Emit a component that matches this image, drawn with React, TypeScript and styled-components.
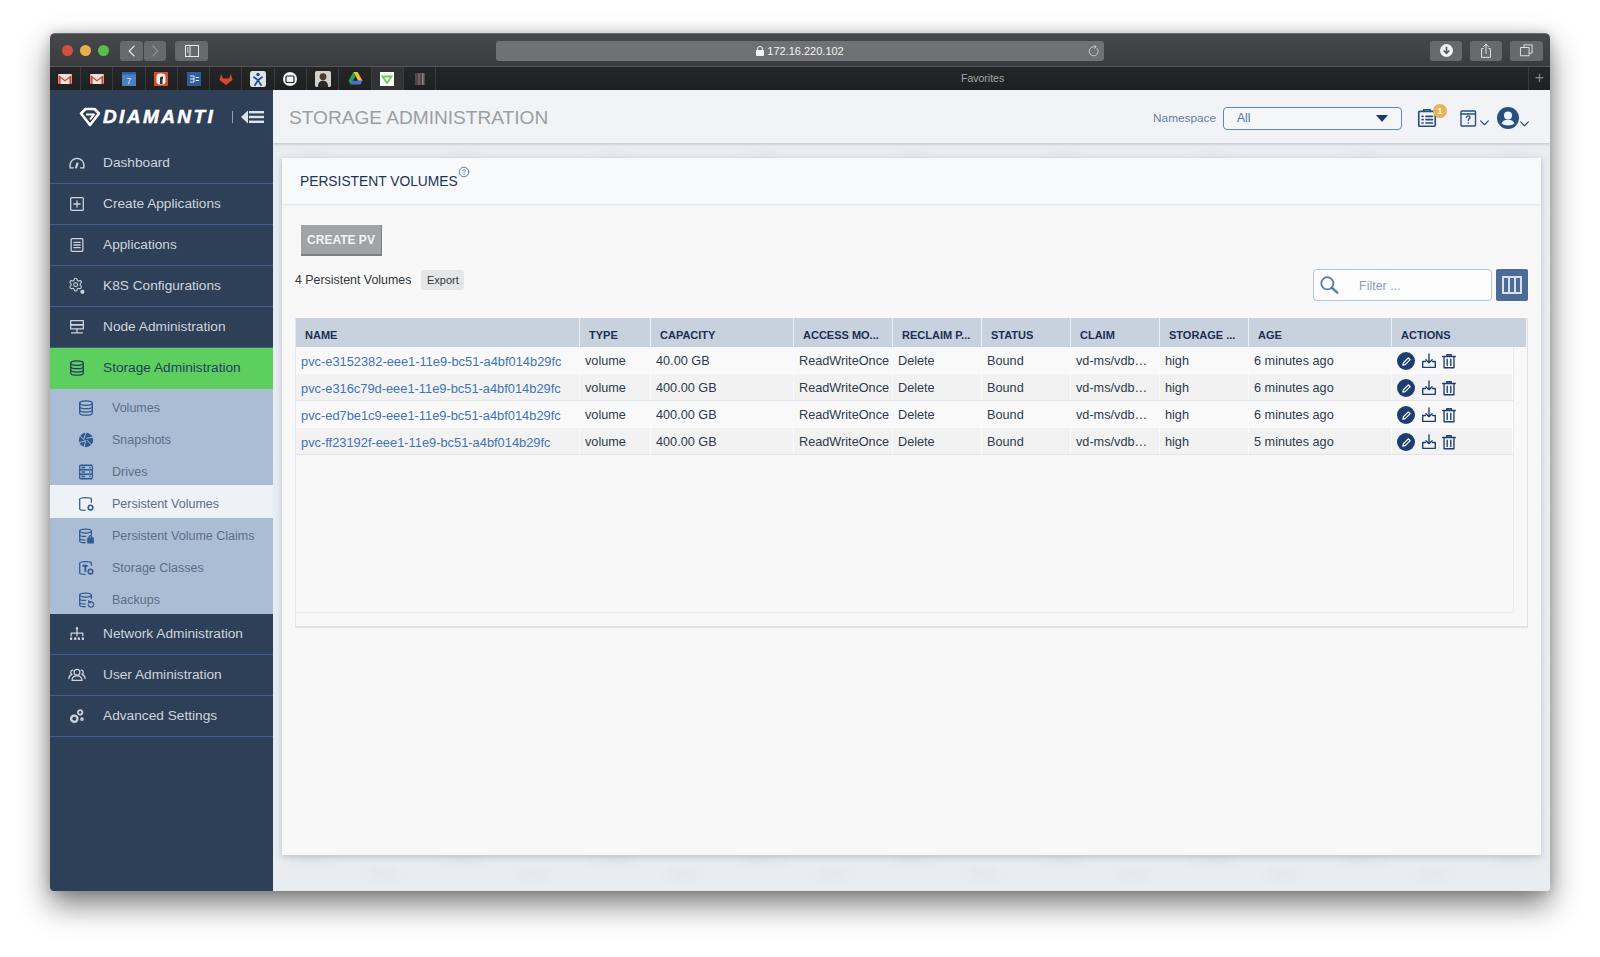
import type { ReactNode } from 'react';
import { Settings } from 'lucide-react';
import styled, { createGlobalStyle } from 'styled-components';

const FONT = '"Liberation Sans", Arial, sans-serif';

const GlobalStyle = createGlobalStyle`
	html, body {
		margin: 0;
		padding: 0;
		background: #fff;
		font-family: ${FONT};
	}
	* { box-sizing: border-box; }
	svg { display: block; }
`;

const Page = styled.div`
	width: 1600px;
	height: 957px;
	padding: 33px 0 0 50px;
	overflow: hidden;
`;

const Window = styled.div`
	width: 1500px;
	height: 858px;
	border-radius: 5px 5px 4px 4px;
	overflow: hidden;
	box-shadow: 0 14px 30px rgba(0, 0, 0, 0.5), 0 0 12px rgba(0, 0, 0, 0.18);
	display: flex;
	flex-direction: column;
`;

const TitleBar = styled.div`
	height: 34px;
	flex: none;
	background: linear-gradient(#46484b, #393b3e);
	border-top: 1px solid #6a6b6d;
	border-bottom: 1px solid #55575a;
	display: flex;
	align-items: center;
	padding: 1px 0 0 12px;
`;

const Light = styled.span<{ $color: string }>`
	width: 11px;
	height: 11px;
	border-radius: 50%;
	background: ${p => p.$color};
	margin-right: 7px;
`;

const ChromeBtn = styled.div<{ $w: number; $ml?: number; $dim?: boolean }>`
	width: ${p => p.$w}px;
	height: 20px;
	margin-left: ${p => p.$ml ?? 0}px;
	background: #68696c;
	border-radius: 3px;
	display: flex;
	align-items: center;
	justify-content: center;
	color: ${p => (p.$dim ? '#8f9092' : '#e8e8e8')};
`;

const AddressBar = styled.div`
	width: 608px;
	height: 20px;
	margin: 0 326px 0 288px;
	background: #707174;
	border-radius: 3px;
	color: #f2f2f2;
	font-size: 11px;
	display: flex;
	align-items: center;
	justify-content: center;
	gap: 3px;
	position: relative;
`;

const Reload = styled.span`
	position: absolute;
	right: 4px;
	top: 4px;
	color: #d8d8d8;
`;

const TabBar = styled.div`
	height: 23px;
	flex: none;
	background: linear-gradient(#252628, #1f2022);
	display: flex;
	align-items: stretch;
	position: relative;
`;

const Fav = styled.div<{ $active?: boolean }>`
	width: 32.3px;
	flex: none;
	border-right: 1px solid #3a3b3d;
	background: ${p => (p.$active ? '#313335' : 'transparent')};
	display: flex;
	align-items: center;
	justify-content: center;

	&:first-child {
		width: 31px;
	}
`;

const Favorites = styled.div`
	position: absolute;
	left: 911px;
	top: 5px;
	color: #a4a5a7;
	font-size: 10.5px;
`;

const AddTab = styled.div`
	position: absolute;
	right: 0;
	top: 0;
	width: 22px;
	height: 23px;
	border-left: 1px solid #3a3b3d;
	color: #8b8c8e;
	font-size: 16px;
	line-height: 21px;
	text-align: center;
`;

const Body = styled.div`
	flex: 1;
	display: flex;
	min-height: 0;
`;

const Sidebar = styled.nav`
	width: 223px;
	flex: none;
	background: #2e4058;
	display: flex;
	flex-direction: column;
`;

const LogoRow = styled.div`
	height: 53px;
	flex: none;
	display: flex;
	align-items: center;
	padding: 0 9px 0 29px;
	color: #fff;
`;

const LogoText = styled.span`
	font-size: 19px;
	font-weight: 700;
	font-style: italic;
	letter-spacing: 2.4px;
	margin-left: 2px;
	-webkit-text-stroke: 0.5px #fff;
`;

const LogoSep = styled.span`
	width: 1px;
	height: 12px;
	background: #8fa0b5;
	margin: 0 8px 0 auto;
`;

const NavItem = styled.div<{ $active?: boolean }>`
	height: 41px;
	flex: none;
	display: flex;
	align-items: center;
	padding: 0 0 1px 17px;
	gap: 16px;
	font-size: 13.7px;
	color: ${p => (p.$active ? '#24405f' : '#cdd4dd')};
	background: ${p => (p.$active ? '#5dcf5f' : 'transparent')};
	border-bottom: 1px solid ${p => (p.$active ? '#5dcf5f' : '#40608a')};
`;

const NavIcon = styled.span<{ $sub?: boolean }>`
	width: 20px;
	height: 20px;
	flex: none;
	display: flex;
	align-items: center;
	justify-content: center;
	color: ${p => (p.$sub ? '#2f5a8f' : 'inherit')};
`;

const SubList = styled.div`
	background: #abbdd4;
	display: flex;
	flex-direction: column;
	height: 225px;
	flex: none;
`;

const SubItem = styled.div<{ $active?: boolean }>`
	flex: 1;
	display: flex;
	align-items: center;
	padding: 5px 0 0 26px;
	gap: 16px;
	font-size: 12.5px;
	color: #5b6e88;
	background: ${p => (p.$active ? '#eef1f5' : 'transparent')};
`;

const Main = styled.main`
	flex: 1;
	min-width: 0;
	background-color: #e9ecf1;
	background-image: radial-gradient(ellipse 34px 12px at 40px 20px, rgba(190, 198, 212, 0.16), transparent),
		radial-gradient(ellipse 24px 14px at 110px 34px, rgba(200, 206, 218, 0.14), transparent);
	background-size: 150px 50px;
	display: flex;
	flex-direction: column;
`;

const Header = styled.header`
	height: 53px;
	flex: none;
	background: #f2f3f6;
	box-shadow: 0 1px 3px rgba(80, 90, 110, 0.3);
	display: flex;
	align-items: center;
	padding: 3px 0 0 16px;
`;

const PageTitle = styled.h1`
	margin: 0 auto 0 0;
	font-size: 19.1px;
	font-weight: 400;
	color: #9a9ea4;
`;

const NsLabel = styled.span`
	font-size: 11.8px;
	color: #5f7fa8;
	margin-right: 7px;
`;

const NsSelect = styled.div`
	width: 179px;
	height: 23px;
	border: 1px solid #5f86b8;
	border-radius: 4px;
	background: #f5f6f8;
	display: flex;
	align-items: center;
	justify-content: space-between;
	padding: 0 13px;
	font-size: 12px;
	color: #4a74ad;
`;

const Caret = styled.span`
	width: 0;
	height: 0;
	border-left: 6px solid transparent;
	border-right: 6px solid transparent;
	border-top: 7px solid #1d3a66;
`;

const HeaderIcons = styled.div`
	display: flex;
	align-items: center;
	margin: 0 20px 0 14px;
	color: #27507f;
`;

const HeadIcon = styled.span<{ $ml?: number }>`
	position: relative;
	margin-left: ${p => p.$ml ?? 0}px;
	display: flex;
	align-items: flex-end;
`;

const Badge = styled.span`
	position: absolute;
	left: 17px;
	top: -3px;
	width: 14px;
	height: 14px;
	border-radius: 50%;
	background: #e9b350;
	color: #fff;
	font-size: 9.5px;
	font-weight: 700;
	line-height: 14px;
	text-align: center;
`;

const Card = styled.section`
	margin: 15px 9px 36px 9px;
	flex: 1;
	background: #f8f8f9;
	box-shadow: 0 2px 6px rgba(110, 120, 140, 0.35);
	display: flex;
	flex-direction: column;
`;

const CardHead = styled.div`
	height: 46px;
	flex: none;
	padding-left: 18px;
	box-shadow: 0 1px 2px rgba(120, 130, 150, 0.18);
	display: flex;
	align-items: flex-start;
	background: #f8f9fa;
`;

const CardTitle = styled.h2`
	margin: 15px 0 0;
	font-size: 13.8px;
	line-height: 17px;
	font-weight: 400;
	color: #1b3357;
`;

const HelpMark = styled.span`
	margin: 8px 0 0 0;
	color: #3a6ea8;
`;

const CardBody = styled.div`
	padding: 21px 13px 0 13px;
	display: flex;
	flex-direction: column;
`;

const CreateButton = styled.button`
	width: 81px;
	height: 31px;
	margin-left: 6px;
	border: 0;
	border-bottom: 2px solid #7d7f82;
	border-right: 1px solid #7d7f82;
	background: #a1a3a6;
	color: #f4f4f4;
	font-family: ${FONT};
	font-size: 12px;
	font-weight: 700;
	padding: 0;
`;

const InfoRow = styled.div`
	margin-top: 13px;
	height: 32px;
	display: flex;
	align-items: flex-start;
`;

const CountText = styled.span`
	font-size: 12.4px;
	line-height: 22px;
	color: #33363b;
`;

const ExportButton = styled.span`
	margin: 1px auto 0 10px;
	width: 43px;
	height: 20px;
	border-radius: 3px;
	background: #e5e6e8;
	color: #33363b;
	font-size: 11px;
	line-height: 20px;
	text-align: center;
`;

const FilterBox = styled.div`
	width: 179px;
	height: 32px;
	border: 1px solid #b5c5da;
	border-radius: 4px;
	background: #fdfdfe;
	display: flex;
	align-items: center;
	padding-left: 4px;
	gap: 19px;
	color: #5f7ea8;
	font-size: 12.5px;
`;

const FilterHint = styled.span`
	padding-top: 2px;
	color: #8d9fb8;
`;

const ColumnsButton = styled.div`
	width: 32px;
	height: 32px;
	margin-left: 4px;
	border-radius: 2px;
	background: #4d6b96;
	display: flex;
	align-items: center;
	justify-content: center;
	color: #d9e0ea;
`;

const TableBox = styled.div`
	margin-top: 17px;
	height: 310px;
	border-right: 1px solid #e0e1e8;
	border-bottom: 2px solid #e0e1e8;
	border-left: 1px solid #e6e7ec;
`;

const COLS = '284px 71px 143px 99px 89px 89px 89px 89px 143px';

const HeadRow = styled.div`
	display: grid;
	grid-template-columns: ${COLS} 1fr;
	height: 29px;
	background: #c8d2de;
`;

const HeadCell = styled.div`
	padding: 9px 0 0 9px;
	font-size: 11px;
	line-height: 16px;
	font-weight: 700;
	color: #1b3052;
	white-space: nowrap;
	overflow: hidden;
	border-right: 1px solid #eef1f4;
`;

const RowsBox = styled.div`
	width: 1218px;
	height: 266px;
	border-right: 1px solid #ececee;
	border-bottom: 1px solid #ececee;
`;

const Row = styled.div<{ $alt?: boolean }>`
	display: grid;
	grid-template-columns: ${COLS} 1fr;
	height: 27px;
	background: ${p => (p.$alt ? '#f2f2f3' : '#f9f9fa')};
	border-bottom: 1px solid ${p => (p.$alt ? '#e3e4e8' : '#fcfcfd')};
`;

const Cell = styled.div`
	padding: 2px 0 0 5px;
	font-size: 12.7px;
	line-height: 25px;
	color: #2e3a4a;
	white-space: nowrap;
	overflow: hidden;
	border-right: 1px solid #fbfbfc;
`;

const NameLink = styled.a`
	color: #3f74b5;
	font-size: 12.85px;
	text-decoration: none;
`;

const Actions = styled(Cell)`
	display: flex;
	align-items: center;
	gap: 2.5px;
	color: #1c3d6e;
`;

const PencilDot = styled.span`
	width: 18px;
	height: 18px;
	margin-right: 2px;
	border-radius: 50%;
	background: #1c3d6e;
	color: #fff;
	display: flex;
	align-items: center;
	justify-content: center;
`;

type GlyphProps = { size?: number; sw?: number; children: ReactNode };

const Glyph = ({ size = 18, sw = 1.4, children }: GlyphProps) => (
	<svg width={size} height={size} viewBox="0 0 20 20" fill="none" stroke="currentColor" strokeWidth={sw} strokeLinecap="round" strokeLinejoin="round">
		{children}
	</svg>
);

const DbShape = () => (
	<>
		<ellipse cx="10" cy="4.5" rx="7" ry="2.5" />
		<path d="M3 4.5v11c0 1.4 3.1 2.5 7 2.5s7-1.1 7-2.5v-11" />
		<path d="M3 8.2c0 1.4 3.1 2.5 7 2.5s7-1.1 7-2.5M3 12c0 1.4 3.1 2.5 7 2.5s7-1.1 7-2.5" />
	</>
);

const icons: Record<string, ReactNode> = {
	dashboard: (
		<>
			<path d="M2.5 15.5C1 9.5 5 4.8 10 4.8s9 4.7 7.5 10.7" />
			<path d="M6 15.5h-3.4M17.4 15.5H14" />
			<path d="M10.5 10.5 9 15" strokeWidth="2.4" />
		</>
	),
	create: (
		<>
			<rect x="3" y="3" width="14" height="14" rx="1" />
			<path d="M10 6.5v7M6.5 10h7" />
		</>
	),
	apps: (
		<>
			<rect x="3.5" y="3" width="13" height="14" rx="1" />
			<path d="M6.5 7h7M6.5 10h7M6.5 13h7" />
		</>
	),
	k8s: (
		<>
			<Settings x={0} y={0} width={17} height={17} strokeWidth={1.7} />
			<circle cx="16" cy="16.500" r="1.600" fill="currentColor" />
		</>
	),
	node: (
		<>
			<rect x="3" y="3" width="14" height="4.500" />
			<rect x="3" y="7.500" width="14" height="4.500" />
			<path d="M10 12v4M4 16.500h12" />
		</>
	),
	storage: <DbShape />,
	network: (
		<>
			<path d="M10 5v4M3.500 12v-3h13v3M10 9v3" />
			<path d="M10 3.500v.5M3.500 15v.5M8 15v.5M12 15v.5M16.500 15v.5" strokeWidth="2.600" />
		</>
	),
	users: (
		<>
			<circle cx="10" cy="7" r="3.200" />
			<path d="M4.500 16c0-3.500 2.500-5 5.500-5s5.500 1.500 5.500 5z" />
			<path d="M5.500 4.500A2.500 2.500 0 0 0 4.500 9.300C2.500 10 1 11.500 1 14M14.500 4.500a2.500 2.500 0 0 1 1 4.800c2 .7 3.500 2.200 3.500 4.700" />
		</>
	),
	settings: (
		<>
			<circle cx="7" cy="13" r="3.500" strokeWidth="2.600" strokeDasharray="2.200 .7" />
			<circle cx="13.500" cy="6" r="2.500" strokeWidth="2" strokeDasharray="1.800 .6" />
			<circle cx="15.500" cy="13.500" r="1.200" strokeWidth="1.600" />
		</>
	),
	snapshots: (
		<>
			<circle cx="10" cy="10" r="8" fill="currentColor" stroke="none" />
			<path d="M10 2 7.500 9M17.500 7l-6.800 1M16 15.500l-4.500-5M8 17.800 9.500 11M2.500 13l6.500-2M3.500 5.500 8 10" stroke="#abbdd4" strokeWidth="1.100" />
		</>
	),
	drives: (
		<>
			<rect x="3" y="2.500" width="14" height="15" rx="1" />
			<path d="M3 7.500h14M3 12.500h14M5.500 5h3M5.500 10h3M5.500 15h3M14 5h.5M14 10h.5M14 15h.5" />
		</>
	),
	pv: (
		<>
			<path d="M16 8V4.500C16 3.400 13.200 3 9.500 3S3 3.400 3 4.500v11C3 16.600 5.500 17 9 17" />
			<circle cx="15" cy="14" r="2.600" strokeDasharray="1.500 .7" strokeWidth="1.800" />
		</>
	),
	pvc: (
		<>
			<ellipse cx="9.500" cy="4.500" rx="6.500" ry="2.200" />
			<path d="M3 4.500v11c0 1 2.500 2 6 2M16 4.500v4M3 8.500c0 1 2.500 2 6.500 2M3 12.500c0 1 2.500 2 6 2" />
			<rect x="12" y="12.500" width="6" height="5" fill="currentColor" />
			<path d="M13.500 12.500V11a1.500 1.500 0 0 1 3 0v1.500" />
		</>
	),
	classes: (
		<>
			<path d="M16 7V4.500C16 3.400 13.200 3 9.500 3S3 3.400 3 4.500v11C3 16.600 5.500 17 9 17" />
			<path d="M7 7.500h4M9.300 7.500v6" strokeWidth="2" />
			<circle cx="15" cy="14" r="2.600" strokeDasharray="1.500 .7" strokeWidth="1.800" />
		</>
	),
	backups: (
		<>
			<ellipse cx="9.500" cy="4.500" rx="6.500" ry="2.200" />
			<path d="M3 4.500v11c0 1 2.500 2 6 2M16 4.500v4M3 8.500c0 1 2.500 2 6.500 2M3 12.500c0 1 2.500 2 6 2" />
			<path d="M12.500 15a3 3 0 1 0 1-2.300M13 10.800v2.200h2" />
		</>
	)
};

const mainTop = [
	['Dashboard', 'dashboard'],
	['Create Applications', 'create'],
	['Applications', 'apps'],
	['K8S Configurations', 'k8s'],
	['Node Administration', 'node']
];

const subItems = [
	['Volumes', 'storage'],
	['Snapshots', 'snapshots'],
	['Drives', 'drives'],
	['Persistent Volumes', 'pv'],
	['Persistent Volume Claims', 'pvc'],
	['Storage Classes', 'classes'],
	['Backups', 'backups']
];

const mainBottom = [
	['Network Administration', 'network'],
	['User Administration', 'users'],
	['Advanced Settings', 'settings']
];

const columns = ['NAME', 'TYPE', 'CAPACITY', 'ACCESS MO...', 'RECLAIM P...', 'STATUS', 'CLAIM', 'STORAGE ...', 'AGE', 'ACTIONS'];

const volumes = [
	{ name: 'pvc-e3152382-eee1-11e9-bc51-a4bf014b29fc', capacity: '40.00 GB', age: '6 minutes ago' },
	{ name: 'pvc-e316c79d-eee1-11e9-bc51-a4bf014b29fc', capacity: '400.00 GB', age: '6 minutes ago' },
	{ name: 'pvc-ed7be1c9-eee1-11e9-bc51-a4bf014b29fc', capacity: '400.00 GB', age: '6 minutes ago' },
	{ name: 'pvc-ff23192f-eee1-11e9-bc51-a4bf014b29fc', capacity: '400.00 GB', age: '5 minutes ago' }
];

const Favicon = ({ kind }: { kind: number }) => {
	const box = { width: 14, height: 14, viewBox: '0 0 14 14' };
	switch (kind) {
		case 0:
		case 1:
			return (
				<svg {...box}>
					<rect y="2" width="14" height="10" rx="1" fill="#e8e2de" />
					<path d="M0.500 3 7 8l6.500-5v9h-2V6L7 9.500 2.500 6v6h-2z" fill="#d0402f" />
				</svg>
			);
		case 2:
			return (
				<svg {...box}>
					<rect width="14" height="14" fill="#4a80c4" />
					<rect width="14" height="2.500" fill="#2f5f9c" />
					<text x="7" y="12" fontSize="9" textAnchor="middle" fill="#d8e6f5" fontFamily={FONT}>7</text>
				</svg>
			);
		case 3:
			return (
				<svg {...box}>
					<rect width="14" height="14" fill="#dc4a2a" />
					<rect x="2.500" y="1.500" width="9" height="11" rx="3" fill="#f4f2ee" />
					<path d="M6 12V6c0-1 1-1.500 3-1.500V7H8.500v5z" fill="#333" />
				</svg>
			);
		case 4:
			return (
				<svg {...box}>
					<rect width="14" height="14" fill="#2e5c9c" />
					<path d="M3 4h4v6H3M3 7h4M8.500 5.500H12M8.500 8.500H12" stroke="#e4edf6" fill="none" />
				</svg>
			);
		case 5:
			return (
				<svg {...box}>
					<path d="M7 13 0.500 8l1.500-6 2 4.500h6L12 2l1.500 6z" fill="#d6492f" />
				</svg>
			);
		case 6:
			return (
				<svg {...box} width={16} height={16}>
					<rect width="14" height="14" rx="2" fill="#dfe3e8" />
					<circle cx="7" cy="3" r="1.500" fill="#1f4f8c" />
					<path d="M3 5l4 3 4-3M7 8l-3 5M7 8l3 5" stroke="#1f4f8c" strokeWidth="1.600" fill="none" />
				</svg>
			);
		case 7:
			return (
				<svg {...box}>
					<circle cx="7" cy="7" r="7" fill="#f3f3f3" />
					<rect x="3" y="4" width="8" height="6.500" rx="1" fill="none" stroke="#222" strokeWidth="1.200" />
				</svg>
			);
		case 8:
			return (
				<svg {...box} width={16} height={16}>
					<rect width="14" height="14" rx="1.500" fill="#d5d2cd" />
					<circle cx="7" cy="5" r="3" fill="#4a3c36" />
					<path d="M2.500 14c0-4 2-5.500 4.500-5.500s4.500 1.500 4.500 5.500z" fill="#2c2826" />
				</svg>
			);
		case 9:
			return (
				<svg {...box} width={15} height={15}>
					<path d="M5 1h4l4.500 8h-4z" fill="#eec13f" />
					<path d="M5 1 .5 9l2 3.500L7 5z" fill="#2f9e5b" />
					<path d="M2.500 12.500h9l2-3.500h-9z" fill="#3d78d8" />
				</svg>
			);
		case 10:
			return (
				<svg {...box}>
					<rect width="14" height="14" fill="#fbfbfb" />
					<path d="M2.500 4.500h9L7 11z" fill="none" stroke="#6ccb5f" strokeWidth="1.800" />
				</svg>
			);
		default:
			return (
				<svg {...box}>
					<rect x="2" y="1" width="10" height="12" fill="#4c4a4a" />
					<rect x="5" y="1" width="2" height="12" fill="#7a5a5a" />
					<rect x="9" y="1" width="1.500" height="12" fill="#8a8484" />
				</svg>
			);
	}
};

const ActionIcons = () => (
	<Actions>
		<PencilDot>
			<svg width="11" height="11" viewBox="0 0 12 12" fill="none" stroke="currentColor" strokeWidth="1.300" strokeLinejoin="round">
				<path d="M2 10l.6-2.600L8 2l2 2-5.400 5.400z" />
			</svg>
		</PencilDot>
		<Glyph size={18} sw={1.5}>
			<path d="M10 2v10M6.500 8.500 10 12l3.500-3.500" />
			<path d="M6 10.500H3V17h14v-6.500h-3" />
		</Glyph>
		<Glyph size={18} sw={1.5}>
			<path d="M3 5h14M7.500 5V3h5v2M4.500 5v12.500h11V5M8 8v7M12 8v7" />
		</Glyph>
	</Actions>
);

export default function App() {
	return (
		<>
			<GlobalStyle />
			<Page>
				<Window>
					<TitleBar>
						<Light $color="#d2503f" />
						<Light $color="#e6b04c" />
						<Light $color="#5cbb4a" />
						<ChromeBtn $w={23} $ml={4}>
							<Glyph size={14} sw={1.7}><path d="M13 3l-7 7 7 7" /></Glyph>
						</ChromeBtn>
						<ChromeBtn $w={22} $ml={1} $dim>
							<Glyph size={14} sw={1.7}><path d="M7 3l7 7-7 7" /></Glyph>
						</ChromeBtn>
						<ChromeBtn $w={33} $ml={9}>
							<svg width="14" height="12" viewBox="0 0 14 12" fill="none" stroke="currentColor">
								<rect x=".5" y=".5" width="13" height="11" />
								<path d="M5 .5v11M2 3h1.500M2 5h1.500M2 7h1.500" />
							</svg>
						</ChromeBtn>
						<AddressBar>
							<svg width="8" height="10" viewBox="0 0 8 10" fill="currentColor">
								<rect y="4" width="8" height="6" rx="1" />
								<path d="M1.500 4.500V3a2.500 2.500 0 0 1 5 0v1.500" fill="none" stroke="currentColor" />
							</svg>
							172.16.220.102
							<Reload>
								<Glyph size={12} sw={1.4}>
									<path d="M15.500 6A7.500 7.500 0 1 1 10 3h3" />
									<path d="M11 .5 13.500 3 11 5.500" />
								</Glyph>
							</Reload>
						</AddressBar>
						<ChromeBtn $w={32}>
							<svg width="13" height="13" viewBox="0 0 14 14">
								<circle cx="7" cy="7" r="7" fill="#f4f4f4" />
								<path d="M7 3v7M4 7l3 3 3-3" stroke="#55575a" strokeWidth="1.800" fill="none" />
							</svg>
						</ChromeBtn>
						<ChromeBtn $w={32} $ml={8}>
							<Glyph size={16} sw={1.2}><path d="M6.500 7H4.500v11h11V7h-2M10 13V1.500M7 4.500l3-3 3 3" /></Glyph>
						</ChromeBtn>
						<ChromeBtn $w={33} $ml={8}>
							<Glyph size={15} sw={1.2}><rect x="2.500" y="6" width="11" height="11" /><path d="M6.500 6V2.500h11v11H13.500" /></Glyph>
						</ChromeBtn>
					</TitleBar>
					<TabBar>
						{Array.from({ length: 12 }, (_, i) => (
							<Fav key={i} $active={i === 10}>
								<Favicon kind={i} />
							</Fav>
						))}
						<Favorites>Favorites</Favorites>
						<AddTab>+</AddTab>
					</TabBar>
					<Body>
						<Sidebar>
							<LogoRow>
								<svg width="22" height="20" viewBox="0 0 22 20" fill="none" stroke="#fff" strokeWidth="2.600" strokeLinejoin="round">
									<path d="M2 6.500 6.500 2h9L20 6.500 11 18z" />
									<path d="M7 7.500h8L11 12.500" strokeWidth="2" />
								</svg>
								<LogoText>DIAMANTI</LogoText>
								<LogoSep />
								<svg width="23" height="14" viewBox="0 0 23 14" fill="#dfe4ea">
									<path d="M0 7l7-6.500V5h0v4h0v4.500z" />
									<rect x="8" y="1" width="15" height="2.400" />
									<rect x="8" y="5.800" width="15" height="2.400" />
									<rect x="8" y="10.600" width="15" height="2.400" />
								</svg>
							</LogoRow>
							{mainTop.map(([label, icon]) => (
								<NavItem key={label}>
									<NavIcon><Glyph>{icons[icon]}</Glyph></NavIcon>
									{label}
								</NavItem>
							))}
							<NavItem $active>
								<NavIcon><Glyph>{icons.storage}</Glyph></NavIcon>
								Storage Administration
							</NavItem>
							<SubList>
								{subItems.map(([label, icon]) => (
									<SubItem key={label} $active={label === 'Persistent Volumes'}>
										<NavIcon $sub><Glyph>{icons[icon]}</Glyph></NavIcon>
										{label}
									</SubItem>
								))}
							</SubList>
							{mainBottom.map(([label, icon]) => (
								<NavItem key={label}>
									<NavIcon><Glyph>{icons[icon]}</Glyph></NavIcon>
									{label}
								</NavItem>
							))}
						</Sidebar>
						<Main>
							<Header>
								<PageTitle>STORAGE ADMINISTRATION</PageTitle>
								<NsLabel>Namespace</NsLabel>
								<NsSelect>
									All
									<Caret />
								</NsSelect>
								<HeaderIcons>
									<HeadIcon>
										<Glyph size={22} sw={1.5}>
											<rect x="2.500" y="4" width="15" height="13.500" rx="1" />
											<path d="M7 4V2.500h6V4M5.500 8.500h1M9 8.500h6M5.500 11.500h1M9 11.500h6M5.500 14.500h1M9 14.500h6" />
										</Glyph>
										<Badge>1</Badge>
									</HeadIcon>
									<HeadIcon $ml={21}>
										<Glyph size={20} sw={1.4}>
											<rect x="2" y="3" width="14.500" height="15" rx="1" />
											<path d="M2 6h14.500" />
											<path d="M7.500 9.500c.3-2.200 3.500-2 3.500 0 0 1.300-1.700 1.400-1.700 3M9.300 15v.3" />
										</Glyph>
										<Glyph size={11} sw={2.200}><path d="M3 7l7 7 7-7" /></Glyph>
									</HeadIcon>
									<HeadIcon $ml={7}>
										<svg width="22" height="22" viewBox="0 0 22 22">
											<circle cx="11" cy="11" r="11" fill="#27507f" />
											<circle cx="11" cy="8.500" r="4" fill="#f2f3f6" />
											<path d="M4.500 16.500c1-3 3.500-3.800 6.500-3.800s5.500.8 6.500 3.800c-3 2.500-10 2.500-13 0z" fill="#f2f3f6" />
										</svg>
										<Glyph size={11} sw={2.200}><path d="M3 7l7 7 7-7" /></Glyph>
									</HeadIcon>
								</HeaderIcons>
							</Header>
							<Card>
								<CardHead>
									<CardTitle>PERSISTENT VOLUMES</CardTitle>
									<HelpMark>
										<Glyph size={12} sw={1.4}>
											<circle cx="10" cy="10" r="8" />
											<path d="M7.500 8c.3-2.500 5-2.300 5 0 0 1.500-2.500 1.500-2.500 3.500M10 14v.3" />
										</Glyph>
									</HelpMark>
								</CardHead>
								<CardBody>
									<CreateButton>CREATE PV</CreateButton>
									<InfoRow>
										<CountText>4 Persistent Volumes</CountText>
										<ExportButton>Export</ExportButton>
										<FilterBox>
											<Glyph size={22} sw={1.7}>
												<circle cx="8.500" cy="8.500" r="5.500" />
												<path d="M12.500 12.500 17.500 17" strokeWidth="2.200" />
											</Glyph>
											<FilterHint>Filter ...</FilterHint>
										</FilterBox>
										<ColumnsButton>
											<svg width="20" height="18" viewBox="0 0 20 18" fill="none" stroke="currentColor" strokeWidth="2">
												<rect x="1" y="1" width="18" height="16" />
												<path d="M7 1v16M13 1v16" />
											</svg>
										</ColumnsButton>
									</InfoRow>
									<TableBox>
										<HeadRow>
											{columns.map(c => (
												<HeadCell key={c}>{c}</HeadCell>
											))}
										</HeadRow>
										<RowsBox>
											{volumes.map((v, i) => (
												<Row key={v.name} $alt={i % 2 === 1}>
													<Cell><NameLink href="#">{v.name}</NameLink></Cell>
													<Cell>volume</Cell>
													<Cell>{v.capacity}</Cell>
													<Cell>ReadWriteOnce</Cell>
													<Cell>Delete</Cell>
													<Cell>Bound</Cell>
													<Cell>vd-ms/vdb…</Cell>
													<Cell>high</Cell>
													<Cell>{v.age}</Cell>
													<ActionIcons />
												</Row>
											))}
										</RowsBox>
									</TableBox>
								</CardBody>
							</Card>
						</Main>
					</Body>
				</Window>
			</Page>
		</>
	);
}
